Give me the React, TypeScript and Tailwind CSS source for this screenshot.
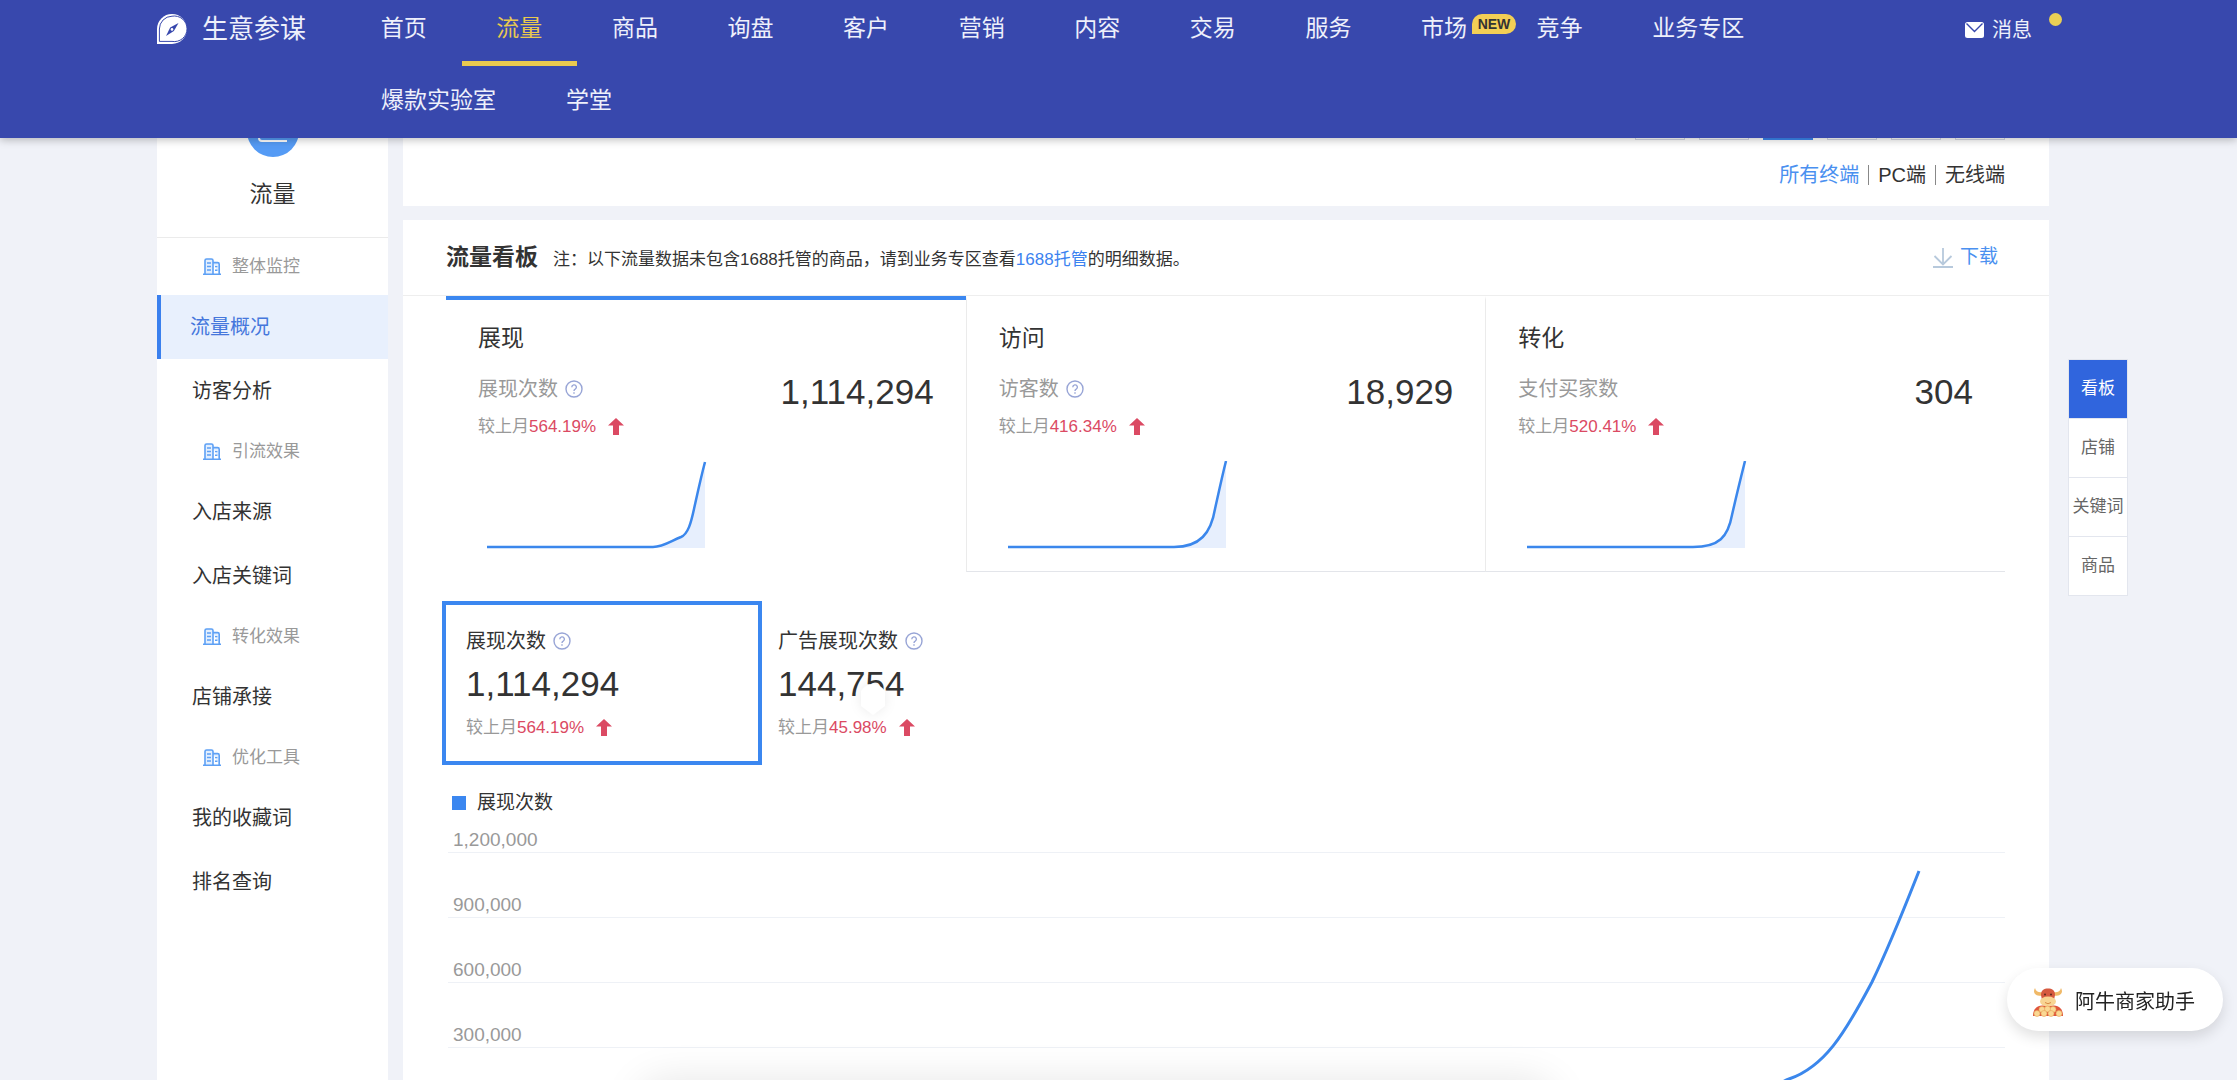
import { useState } from 'react';
import clsx from 'clsx';

// Types
interface Board {
  title: string;
  label: string;
  help: boolean;
  value: string;
  change: string;
  line: string;
}

interface Metric {
  label: string;
  value: string;
  change: string;
}

type SideItem = { type: 'group' | 'link'; label: string };

const mainNav = ['首页', '流量', '商品', '询盘', '客户', '营销', '内容', '交易', '服务', '市场', '竞争', '业务专区'];
const subNav = ['爆款实验室', '学堂'];

const sideItems: SideItem[] = [
  { type: 'group', label: '整体监控' },
  { type: 'link', label: '流量概况' },
  { type: 'link', label: '访客分析' },
  { type: 'group', label: '引流效果' },
  { type: 'link', label: '入店来源' },
  { type: 'link', label: '入店关键词' },
  { type: 'group', label: '转化效果' },
  { type: 'link', label: '店铺承接' },
  { type: 'group', label: '优化工具' },
  { type: 'link', label: '我的收藏词' },
  { type: 'link', label: '排名查询' },
];

const boards: Board[] = [
  {
    title: '展现',
    label: '展现次数',
    help: true,
    value: '1,114,294',
    change: '564.19%',
    line: 'M0 86H166C176 86 184 80 194 76C201 73 204 62 207 48C211 30 214 16 218 1',
  },
  {
    title: '访问',
    label: '访客数',
    help: true,
    value: '18,929',
    change: '416.34%',
    line: 'M0 86H166C192 86 203 72 207 48C211 30 214 16 218 0',
  },
  {
    title: '转化',
    label: '支付买家数',
    help: false,
    value: '304',
    change: '520.41%',
    line: 'M0 86H166C192 86 201 76 205 54C210 32 214 16 218 0',
  },
];

const metrics: Metric[] = [
  { label: '展现次数', value: '1,114,294', change: '564.19%' },
  { label: '广告展现次数', value: '144,754', change: '45.98%' },
];

const periods = ['日', '周', '月', '7天', '30天', '自定义'];
const terminals = ['所有终端', 'PC端', '无线端'];
const axisLabels = ['1,200,000', '900,000', '600,000', '300,000'];
const anchors = ['看板', '店铺', '关键词', '商品'];

// Icons
const LogoIcon = () => (
  <svg viewBox="0 0 30 30" className="h-[30px] w-[30px]" aria-hidden="true">
    <path d="M15 0a15 15 0 1 1 0 30H0V15A15 15 0 0 1 15 0Z" fill="#fff" />
    <path d="M15 2.2A12.8 12.8 0 1 1 15 27.4H2.4V15A12.8 12.8 0 0 1 15 2.2Z" fill="none" stroke="#3848ad" strokeWidth="1" />
    <path d="M21.5 9 16.9 17 9 22 13.2 13.4Z" fill="#3848ad" />
    <circle cx="15" cy="15.4" r="1.3" fill="#fff" />
  </svg>
);

const MailIcon = () => (
  <svg viewBox="0 0 19 16" className="h-4 w-[19px]" aria-hidden="true">
    <rect width="19" height="16" rx="2.5" fill="#fff" />
    <path d="m1.5 1.5 8 8 8-8" fill="none" stroke="#3848ad" strokeWidth="1.4" />
  </svg>
);

const BuildingIcon = () => (
  <svg viewBox="0 0 18 17" className="h-[17px] w-[18px]" fill="none" stroke="#5da0f5" strokeWidth="1.6" aria-hidden="true">
    <path d="M2 16V2.6Q2 1 3.6 1H8.4Q10 1 10 2.6V16M10 4.6H14.6Q16.2 4.6 16.2 6.2V16M0 16.2H18" fill="#e3effe" />
    <path d="M4 5H8M4 8.5H8M4 12H8M12 8.6H14.4M12 12.2H14.4" strokeWidth="1.4" />
  </svg>
);

const HelpIcon = () => (
  <svg viewBox="0 0 18 18" className="h-[18px] w-[18px]" fill="none" stroke="#98a5d6" strokeWidth="1.4" aria-hidden="true">
    <circle cx="9" cy="9" r="8" />
    <path d="M6.8 7.2a2.3 2.3 0 1 1 3.4 2c-.8.4-1.2.8-1.2 1.7M9 12.3v1.4" />
  </svg>
);

const UpArrow = () => (
  <svg viewBox="0 0 16 17" className="mb-[2px] h-[17px] w-4" aria-hidden="true">
    <path d="M8 0 16 7.6H11V17H5V7.6H0Z" fill="#db4a63" />
  </svg>
);

const DownloadIcon = () => (
  <svg viewBox="0 0 20 20" className="h-5 w-5" fill="none" stroke="#b7c9dc" strokeWidth="1.8" aria-hidden="true">
    <path d="M10 0V16M1.5 8 10 16.4 18.5 8M0 19H20" />
  </svg>
);

const OxIcon = () => (
  <svg viewBox="0 0 30 30" className="h-[30px] w-[30px]" aria-hidden="true">
    <path d="M2 1C-1 6 3 10 11 8.500L11 5C6 6 3 5 2 1Z" fill="#f0b968" />
    <path d="M28 1C31 6 27 10 19 8.500L19 5C24 6 27 5 28 1Z" fill="#f0b968" />
    <path d="M0 29C0 22 4 18.500 9 18.500H21C26 18.500 30 22 30 29Z" fill="#e0553c" />
    <path d="M8 8C8 3 11 1.500 15 1.500S22 3 22 8L21 13H9Z" fill="#d6593f" />
    <circle cx="12" cy="7.500" r="1" fill="#5b2a20" />
    <circle cx="18" cy="7.500" r="1" fill="#5b2a20" />
    <ellipse cx="15" cy="14.500" rx="8" ry="5" fill="#f8d493" />
    <path d="M12 15.500Q15 18 18 15.500" fill="none" stroke="#d88b45" strokeWidth="1" />
    <g fill="#fad894" stroke="#e5a65a" strokeWidth=".6">
      <circle cx="9" cy="22.500" r="3" />
      <circle cx="20" cy="22.500" r="3" />
      <circle cx="14.500" cy="22" r="3" />
      <circle cx="4" cy="26.500" r="3" />
      <circle cx="26" cy="26.500" r="3" />
      <circle cx="11" cy="26.500" r="3" />
      <circle cx="18" cy="26.500" r="3" />
    </g>
  </svg>
);

const Change = ({ value }: { value: string }) => (
  <p className="flex items-center text-[17px] leading-6 text-[#999]">
    <span>较上月</span>
    <span className="mr-3 text-[#db4a63]">{value}</span>
    <UpArrow />
  </p>
);

const Header = () => (
  <header className="relative z-10 flex h-[138px] shrink-0 bg-[#3848ad] pl-[157px] pr-[188px] text-[#eef0fb] shadow-[0_2px_8px_rgba(0,0,0,0.25)]">
    <a href="#home" className="flex h-[58px] w-[189px] shrink-0 items-center gap-[15px] text-[26px] leading-8">
      <LogoIcon />
      生意参谋
    </a>
    <nav className="flex-1 text-[23px] leading-[56px]">
      <ul className="flex h-[72px]">
        {mainNav.map((item) => (
          <li key={item} className="flex-auto text-center">
            <a
              href={`#${item}`}
              className={clsx('block h-[66px]', item === '流量' && 'border-b-[5px] border-[#e9c94f] text-[#e9c94f]')}
            >
              <span className="relative">
                {item}
                {item === '市场' && (
                  <span className="absolute -top-px left-full ml-[5px] h-5 w-11 rounded-full rounded-bl-none bg-[#f3cf55] text-[14px] font-bold leading-5 text-[#333]">
                    NEW
                  </span>
                )}
              </span>
            </a>
          </li>
        ))}
      </ul>
      <ul className="flex">
        {subNav.map((item) => (
          <li key={item} className="px-[35px]">
            <a href={`#${item}`}>{item}</a>
          </li>
        ))}
      </ul>
    </nav>
    <a href="#messages" className="relative ml-[186px] flex h-[60px] w-[84px] items-center gap-2 text-[20px]">
      <MailIcon />
      消息
      <span className="absolute left-full top-[13px] h-[13px] w-[13px] rounded-full bg-[#e9cf55]" />
    </a>
  </header>
);

const Sidebar = () => {
  const [current, setCurrent] = useState('流量概况');

  return (
    <aside className="w-[231px] shrink-0 bg-white">
      <div className="flex flex-col items-center border-b border-[#ebebeb] pb-[27px]">
        <div className="-mt-[33px] flex h-[52px] w-[52px] items-center justify-center rounded-full bg-[#559bf5]">
          <svg viewBox="0 0 30 24" className="h-6 w-[30px]" fill="none" stroke="#fff" strokeWidth="2" aria-hidden="true">
            <path d="M1 0V19Q1 22 4 22H29M6 15 12 8 18 12 27 3" />
          </svg>
        </div>
        <h2 className="mt-[21px] text-[23px] leading-8 text-[#333]">流量</h2>
      </div>
      <ul>
        {sideItems.map((item) =>
          item.type === 'group' ? (
            <li key={item.label} className="flex h-[57px] items-center gap-[11px] pl-[46px] text-[17px] text-[#999]">
              <BuildingIcon />
              {item.label}
            </li>
          ) : (
            <li key={item.label}>
              <button
                type="button"
                onClick={() => setCurrent(item.label)}
                className={clsx(
                  'h-16 w-full cursor-pointer text-left text-[20px]',
                  current === item.label
                    ? 'border-l-4 border-[#3a80ee] bg-[#e8f0fd] pl-[29px] text-[#4577dc]'
                    : 'pl-[35px] text-[#333]'
                )}
              >
                {item.label}
              </button>
            </li>
          )
        )}
      </ul>
    </aside>
  );
};

const FilterCard = () => {
  const [terminal, setTerminal] = useState('所有终端');

  return (
    <section className="flex flex-col items-end bg-white pb-[17px] pr-11">
      <div className="-mt-[34px] flex gap-[14px]">
        {periods.map((period) => (
          <button
            key={period}
            type="button"
            aria-label={period}
            className={clsx(
              'h-9 w-[50px] border',
              period === '月' ? 'border-[#3b87f0] bg-[#3b87f0]' : 'border-[#d5d9e6] bg-white'
            )}
          />
        ))}
      </div>
      <div className="mt-[21px] flex items-center text-[20px] leading-7">
        {terminals.map((item, i) => (
          <div key={item} className="flex items-center">
            {i > 0 && <span className="mx-[9px] h-5 w-px bg-[#888]" />}
            <button
              type="button"
              onClick={() => setTerminal(item)}
              className={clsx('cursor-pointer', terminal === item ? 'text-[#4a90f0]' : 'text-[#333]')}
            >
              {item}
            </button>
          </div>
        ))}
      </div>
    </section>
  );
};

const TrendChart = () => (
  <div className="relative ml-[2px]">
    <ul className="text-[19px] leading-5 text-[#999]">
      {axisLabels.map((label, i) => (
        <li
          key={label}
          className={clsx('flex items-end border-b border-[#eef1f6] pb-[2px] pl-[5px]', i === 0 ? 'h-9' : 'h-[65px]')}
        >
          {label}
        </li>
      ))}
      <li className="h-[65px] border-b border-[#eef1f6]" />
    </ul>
    <svg
      viewBox="0 0 1557 296"
      preserveAspectRatio="none"
      className="absolute inset-0 h-full w-full"
      fill="none"
      stroke="#3b87ec"
      strokeWidth="3"
      aria-hidden="true"
    >
      <path
        vectorEffect="non-scaling-stroke"
        d="M85 294H1270C1300 284 1320 271 1341 262C1376 250 1396 218 1424 165C1442 128 1456 92 1471 54"
      />
    </svg>
  </div>
);

const TrafficBoard = () => {
  const [board, setBoard] = useState('展现');
  const [metric, setMetric] = useState('展现次数');

  return (
    <section className="mt-[14px] flex-1 bg-white">
      {/* Title */}
      <div className="flex h-[76px] items-center border-b border-[#eeeeee] pl-[43px] pr-[51px]">
        <h1 className="text-[23px] font-bold text-[#333]">流量看板</h1>
        <p className="ml-[15px] flex-1 pt-1 text-[17px] text-[#333]">
          注：以下流量数据未包含1688托管的商品，请到业务专区查看
          <a href="#hosting" className="text-[#3b82f0]">1688托管</a>
          的明细数据。
        </p>
        <button type="button" className="flex cursor-pointer items-center gap-[7px] text-[19px] text-[#4a90f0]">
          <DownloadIcon />
          下载
        </button>
      </div>

      <div className="pl-[43px] pr-11">
        {/* Boards */}
        <div className="grid grid-cols-3">
          {boards.map((item) => (
            <button
              key={item.title}
              type="button"
              onClick={() => setBoard(item.title)}
              className={clsx(
                'flex h-[276px] cursor-pointer flex-col border-t-4 px-8 pt-[22px] text-left',
                board === item.title ? 'border-[#3b87f0]' : 'border-b border-l border-b-[#e3e5ea] border-l-[#ebebeb] border-t-transparent'
              )}
            >
              <h3 className="text-[23px] leading-8 text-[#333]">{item.title}</h3>
              <div className="mt-5 flex justify-between self-stretch">
                <div>
                  <p className="mb-[11px] flex items-center gap-[7px] text-[20px] leading-[30px] text-[#999]">
                    {item.label}
                    {item.help && <HelpIcon />}
                  </p>
                  <Change value={item.change} />
                </div>
                <span className="text-[35px] leading-9 text-[#333]">{item.value}</span>
              </div>
              <svg viewBox="0 0 220 88" className="ml-[9px] mt-[22px] h-[88px] w-[220px]" aria-hidden="true">
                <path d={`${item.line}V87H0Z`} fill="#e7effd" />
                <path d={item.line} fill="none" stroke="#3b87ec" strokeWidth="2.5" />
              </svg>
            </button>
          ))}
        </div>

        {/* Metrics */}
        <div className="-ml-1 mt-[29px] flex">
          {metrics.map((item) => (
            <button
              key={item.label}
              type="button"
              onClick={() => setMetric(item.label)}
              className={clsx(
                'relative h-[164px] w-80 cursor-pointer border-4 text-left text-[#333]',
                metric === item.label ? 'border-[#3b87f0] pl-5' : 'border-transparent pl-3'
              )}
            >
              <p className="flex items-center gap-[7px] text-[20px] leading-[30px]">
                {item.label}
                <HelpIcon />
              </p>
              <p className="mb-3 mt-2 text-[35px] leading-10">{item.value}</p>
              <Change value={item.change} />
              {item.label === '广告展现次数' && (
                <svg viewBox="0 0 24 34" className="absolute left-[95px] top-[76px] h-[34px] w-6 drop-shadow-[0_0_6px_rgba(0,0,0,0.08)]" aria-hidden="true">
                  <path d="M0 10Q5 3 12 3T24 10V25L12 34 0 25Z" fill="#fff" />
                </svg>
              )}
            </button>
          ))}
        </div>

        {/* Trend */}
        <div className="mt-6 flex items-center gap-[11px] pl-[6px] text-[19px] leading-7 text-[#333]">
          <span className="h-[14px] w-[14px] bg-[#3b87f0]" />
          展现次数
        </div>
        <TrendChart />
      </div>
    </section>
  );
};

const App = () => {
  return (
    <div className="flex h-screen flex-col overflow-hidden bg-[#f0f2f8] font-['Liberation_Sans','Noto_Sans_CJK_SC',sans-serif]">
      <Header />
      <div className="flex min-h-0 flex-1 gap-[15px] overflow-hidden pl-[157px]">
        <Sidebar />
        <main className="flex min-w-0 flex-1 flex-col">
          <FilterCard />
          <TrafficBoard />
        </main>
        <nav className="mr-[109px] mt-[221px] w-16 shrink-0 pl-1">
          <ul className="w-[60px] border border-[#e3e6ee] bg-white text-center text-[17px] leading-[58px] text-[#666]">
            {anchors.map((item, i) => (
              <li key={item} className={i === 0 ? 'bg-[#3065dd] text-white' : 'border-t border-[#e3e6ee]'}>
                <a href={`#${item}`} className="block whitespace-nowrap">{item}</a>
              </li>
            ))}
          </ul>
        </nav>
      </div>

      {/* Floating items */}
      <div className="fixed -bottom-12 left-[29%] right-[31%] h-9 rounded-full bg-white shadow-[0_0_40px_12px_rgba(0,0,0,0.1)]" />
      <button
        type="button"
        className="fixed bottom-[49px] right-[14px] flex h-[63px] w-[216px] cursor-pointer items-center gap-3 rounded-full bg-white pl-[26px] pt-1 text-[20px] text-[#222] shadow-[0_6px_14px_rgba(0,0,0,0.12)]"
      >
        <OxIcon />
        阿牛商家助手
      </button>
    </div>
  );
};

export default App;
